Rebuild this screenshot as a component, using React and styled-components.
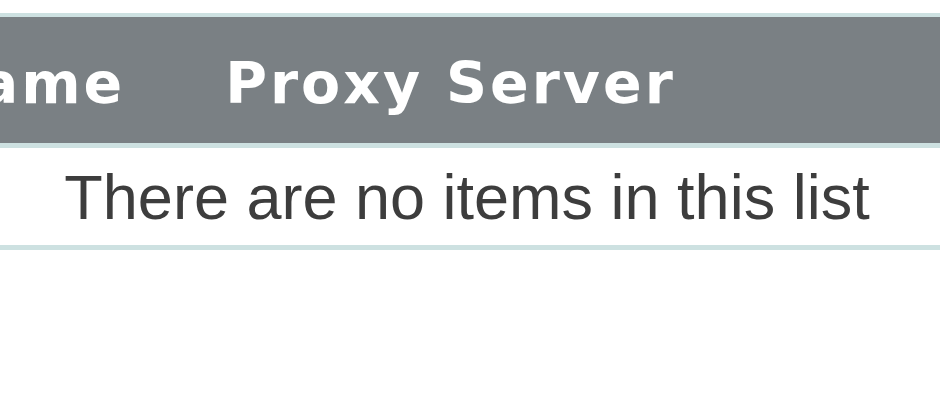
import React from 'react';
import styled, { createGlobalStyle } from 'styled-components';

const GlobalStyle = createGlobalStyle`
  body {
    margin: 0;
    background: #fff;
  }
`;

const columns = ['Name', 'Proxy Server'];

const App = () => {
  return (
    <>
      <GlobalStyle />
      <ListView>
        <HeaderRow>
          {columns.map((col, i) => (
            <HeaderCell key={col} $clipped={i === 0}>{col}</HeaderCell>
          ))}
        </HeaderRow>
        <EmptyRow>There are no items in this list</EmptyRow>
      </ListView>
    </>
  );
};

export default App;

const ListView = styled.div`
  width: 940px;
  margin-top: 13px;
  overflow: hidden;
`;

const HeaderRow = styled.div`
  display: flex;
  align-items: center;
  gap: 100px;
  box-sizing: border-box;
  height: 135px;
  padding-top: 6px;
  background-color: #7a8084;
  border-top: 4px solid #cde1e1;
  border-bottom: 5px solid #cde1e1;
`;

const HeaderCell = styled.div`
  flex: none;
  margin-left: ${p => (p.$clipped ? '-71px' : '0')};
  font-family: "DejaVu Sans", "Liberation Sans", sans-serif;
  font-weight: bold;
  font-size: 57px;
  letter-spacing: 3px;
  color: #fff;
  white-space: nowrap;
`;

const EmptyRow = styled.div`
  display: flex;
  align-items: center;
  justify-content: center;
  height: 97px;
  padding-right: 6px;
  border-bottom: 5px solid #cde1e1;
  font-family: "Liberation Sans", Arial, sans-serif;
  font-size: 63px;
  color: #3d3d3d;
`;
